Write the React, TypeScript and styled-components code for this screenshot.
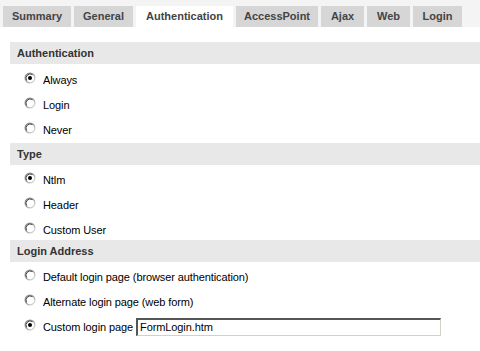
import React from 'react'
import styled, { createGlobalStyle } from 'styled-components'

const GlobalStyle = createGlobalStyle`
    html, body {
        margin: 0;
        padding: 0;
        background: #ffffff;
    }
    body {
        font-family: 'Liberation Sans', Arial, sans-serif;
    }
`

const Page = styled.div`
    width: 480px;
    height: 351px;
    overflow: hidden;
    background: #fff;
`

const TabStrip = styled.div`
    display: flex;
    gap: 3px;
    height: 27px;
    padding: 6px 0 0 3px;
    box-sizing: border-box;
    background: #f4f4f4;
`

const Tab = styled.div<{ $active?: boolean; $w: number }>`
    width: ${(p) => p.$w}px;
    height: 21px;
    display: flex;
    align-items: center;
    justify-content: center;
    background: ${(p) => (p.$active ? '#ffffff' : '#d6d6d6')};
    color: #444;
    font: bold 11px 'Liberation Sans', Arial, sans-serif;
    padding-bottom: 1px;
    box-sizing: border-box;
`

const Content = styled.div`
    padding: 15px 0 0 10px;
`

const SectionHeader = styled.div`
    height: 22px;
    display: flex;
    align-items: center;
    padding-left: 7px;
    background: #e8e8e8;
    color: #333;
    font: bold 11px 'Liberation Sans', Arial, sans-serif;
`

const Options = styled.div<{ $top: number; $bottom: number }>`
    padding-left: 14px;
    padding-top: ${(p) => p.$top}px;
    margin-bottom: ${(p) => p.$bottom}px;
`

const Row = styled.label`
    display: flex;
    align-items: center;
    height: 25px;
    gap: 7px;
    color: #000;
    font: 11px 'Liberation Sans', Arial, sans-serif;
    letter-spacing: -0.1px;
`

const TextInput = styled.input`
    width: 305px;
    height: 18px;
    box-sizing: border-box;
    margin-left: -4px;
    border: 1px solid #d4d0c8;
    border-top: 2px solid #555;
    border-left: 2px solid #555;
    padding: 0 2px;
    font: 11px 'Liberation Sans', Arial, sans-serif;
    letter-spacing: -0.1px;
    color: #000;
    outline: none;
`

function Radio({ checked }: { checked?: boolean }) {
    return (
        <svg width="12" height="12" viewBox="0 0 12 12" style={{ flex: 'none', marginTop: -3 }}>
            <defs>
                <linearGradient id="rg" x1="0" y1="0" x2="1" y2="1">
                    <stop offset="0" stopColor="#808080" />
                    <stop offset="0.5" stopColor="#a0a0a0" />
                    <stop offset="1" stopColor="#f0f0f0" />
                </linearGradient>
            </defs>
            <circle cx="6" cy="6" r="5.5" fill="url(#rg)" />
            <circle cx="6" cy="6" r="4.3" fill="#fff" />
            <path d="M2.6 8.5 A4.3 4.3 0 0 1 8.5 2.6" stroke="#404040" strokeWidth="1" fill="none" />
            {checked && <circle cx="6" cy="6" r="2" fill="#000" />}
        </svg>
    )
}

const tabs = [
    { label: 'Summary', w: 68 },
    { label: 'General', w: 59 },
    { label: 'Authentication', w: 97, active: true },
    { label: 'AccessPoint', w: 82 },
    { label: 'Ajax', w: 43 },
    { label: 'Web', w: 43 },
    { label: 'Login', w: 49 },
]

export default function App() {
    return (
        <Page>
            <GlobalStyle />
            <TabStrip>
                {tabs.map((t) => (
                    <Tab key={t.label} $w={t.w} $active={t.active}>
                        {t.label}
                    </Tab>
                ))}
            </TabStrip>
            <Content>
                <SectionHeader>Authentication</SectionHeader>
                <Options $top={3} $bottom={1}>
                    <Row><Radio checked />Always</Row>
                    <Row><Radio />Login</Row>
                    <Row><Radio />Never</Row>
                </Options>
                <SectionHeader>Type</SectionHeader>
                <Options $top={2} $bottom={-2}>
                    <Row><Radio checked />Ntlm</Row>
                    <Row><Radio />Header</Row>
                    <Row><Radio />Custom User</Row>
                </Options>
                <SectionHeader>Login Address</SectionHeader>
                <Options $top={2} $bottom={0}>
                    <Row><Radio />Default login page (browser authentication)</Row>
                    <Row><Radio />Alternate login page (web form)</Row>
                    <Row>
                        <Radio checked />
                        Custom login page
                        <TextInput defaultValue="FormLogin.htm" />
                    </Row>
                </Options>
            </Content>
        </Page>
    )
}
